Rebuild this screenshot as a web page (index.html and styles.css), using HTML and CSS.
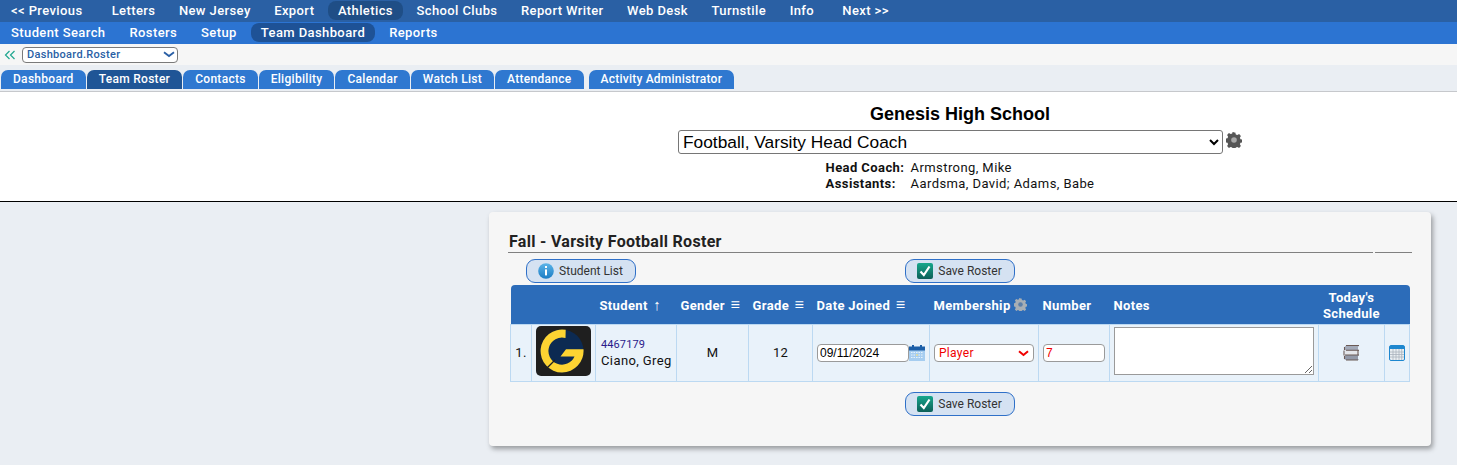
FILE: index.html
```html
<!DOCTYPE html>
<html lang="en">
<head>
<meta charset="utf-8">
<title>Team Roster</title>
<link rel="stylesheet" href="styles.css">
</head>
<body>
<nav class="nav nav-top">
  <a class="nav-item nav-edge-l">&lt;&lt; Previous</a>
  <a class="nav-item">Letters</a>
  <a class="nav-item">New Jersey</a>
  <a class="nav-item">Export</a>
  <a class="nav-item nav-active-top">Athletics</a>
  <a class="nav-item">School Clubs</a>
  <a class="nav-item">Report Writer</a>
  <a class="nav-item">Web Desk</a>
  <a class="nav-item">Turnstile</a>
  <a class="nav-item nav-edge-r">Info</a>
  <a class="nav-item">Next &gt;&gt;</a>
</nav>
<nav class="nav nav-sub">
  <a class="nav-item">Student Search</a>
  <a class="nav-item">Rosters</a>
  <a class="nav-item">Setup</a>
  <a class="nav-item nav-active-sub">Team Dashboard</a>
  <a class="nav-item">Reports</a>
</nav>
<div class="crumb">
  <svg class="crumb-icon" width="12" height="10" viewBox="0 0 12 10"><path d="M5.5 1 1.5 5l4 4M10.5 1l-4 4 4 4" fill="none" stroke="#1fa68f" stroke-width="1.2"/></svg>
  <div class="page-select">Dashboard.Roster
    <svg class="page-chevron" width="12" height="7" viewBox="0 0 12 7"><path d="M1 1.2 6 5l5-3.800" fill="none" stroke="#2a5fa5" stroke-width="1.8"/></svg>
  </div>
</div>
<div class="tabs">
  <a class="tab">Dashboard</a>
  <a class="tab tab-active">Team Roster</a>
  <a class="tab">Contacts</a>
  <a class="tab">Eligibility</a>
  <a class="tab">Calendar</a>
  <a class="tab">Watch List</a>
  <a class="tab">Attendance</a>
  <a class="tab tab-gap">Activity Administrator</a>
</div>
<header class="team-head">
  <h1 class="school">Genesis High School</h1>
  <div class="team-pick">
    <select class="team-select"><option>Football, Varsity Head Coach</option></select>
    <svg class="gear" width="16" height="16" viewBox="0 0 16 16"><use href="#gear"/></svg>
  </div>
  <dl class="staff">
    <dt>Head Coach:</dt><dd>Armstrong, Mike</dd>
    <dt>Assistants:</dt><dd>Aardsma, David; Adams, Babe</dd>
  </dl>
</header>
<main class="main">
  <section class="card">
    <div class="card-title">
      <h2 class="title-text">Fall - Varsity Football Roster</h2>
      <span class="title-end"></span>
    </div>
    <div class="actions">
      <button class="btn btn-list">
        <svg width="16" height="16" viewBox="0 0 16 16"><defs><linearGradient id="info" x1="0" y1="0" x2="0" y2="1"><stop offset="0" stop-color="#5bb4e8"/><stop offset="1" stop-color="#1b7cc4"/></linearGradient></defs><circle cx="8" cy="8" r="7.8" fill="url(#info)"/><rect x="7" y="3" width="2" height="2" fill="#fff"/><rect x="7" y="6.4" width="2" height="6" fill="#fff"/></svg>
        Student List
      </button>
      <button class="btn">
        <svg width="16" height="16" viewBox="0 0 16 16"><use href="#check"/></svg>
        Save Roster
      </button>
    </div>
    <table class="roster">
      <colgroup>
        <col class="c-num"><col class="c-pic"><col class="c-student"><col class="c-gender"><col class="c-grade"><col class="c-date"><col class="c-member"><col class="c-number"><col class="c-notes"><col class="c-sched"><col class="c-cal">
      </colgroup>
      <thead>
        <tr>
          <th></th><th></th>
          <th class="th-left">Student <span class="sort sort-arrow">↑</span></th>
          <th class="th-left">Gender <span class="sort">≡</span></th>
          <th class="th-left">Grade <span class="sort">≡</span></th>
          <th class="th-left">Date Joined <span class="sort">≡</span></th>
          <th class="th-left">Membership <svg class="th-gear" width="13" height="13" viewBox="0 0 16 16"><use href="#gear-light"/></svg></th>
          <th class="th-left">Number</th>
          <th class="th-left">Notes</th>
          <th class="th-sched">Today's Schedule</th>
          <th></th>
        </tr>
      </thead>
      <tbody>
        <tr>
          <td class="td-num">1.</td>
          <td class="td-pic">
            <svg class="logo" width="55" height="50" viewBox="0 0 55 50">
              <rect width="55" height="50" rx="5" fill="#1f1f1f"/>
              <circle cx="26" cy="25" r="21.500" fill="#0c2a52"/>
              <path d="M29.700 3.800A21.500 21.500 0 1 0 47.500 23.300H30L24.500 30.500H38.500A13.600 13.600 0 1 1 29.500 11.900Z" fill="#fdd432"/>
              <path d="M11 42 19 34" stroke="#1f1f1f" stroke-width="1.200"/>
            </svg>
          </td>
          <td class="td-student"><span class="sid">4467179</span><span class="sname">Ciano, Greg</span></td>
          <td class="td-center">M</td>
          <td class="td-center">12</td>
          <td class="td-date"><div class="inline-field"><input class="input input-date" value="09/11/2024">
            <svg width="16" height="16" viewBox="0 0 16 16"><use href="#cal-a"/></svg></div></td>
          <td class="td-member"><div class="member-select">Player
            <svg class="member-chevron" width="11" height="7" viewBox="0 0 11 7"><path d="M1 1.2 5.5 5 10 1.2" fill="none" stroke="#f00000" stroke-width="2"/></svg></div></td>
          <td class="td-number"><input class="input input-number" value="7"></td>
          <td class="td-notes"><textarea class="notes"></textarea></td>
          <td class="td-center td-icon">
            <svg width="17" height="17" viewBox="0 0 17 17"><path d="M3 1.500h13l-1 1.500v3l1 .5H3L1.500 6V3Z" fill="#a3aab8"/><path d="M2 6.500h13v4.500H2Z" fill="#e4e6ea"/><path d="M3 11h13l-1 1v3l1 1H3l-2-1v-3Z" fill="#9299a8"/><path d="M3 1.500h13M1.500 3v3M3 6.300h13M1 6.500v5M15 6.500v5M2 11h14M1.500 12v3M3 16h12" stroke="#6b5a55" stroke-width="1.1" fill="none"/></svg>
          </td>
          <td class="td-center td-icon">
            <svg width="16" height="16" viewBox="0 0 16 16"><rect x=".5" y=".5" width="15" height="15" rx="1.500" fill="#e9eef2" stroke="#1e87cf"/><rect x="1" y="1" width="14" height="3" fill="#1e87cf"/><path d="M1 7h14M1 9.500h14M1 12h14M4 4v11M7 4v11M10 4v11M12.700 4v11" stroke="#aab3bd" stroke-width=".8"/></svg>
          </td>
        </tr>
      </tbody>
    </table>
    <div class="actions-bottom">
      <button class="btn">
        <svg width="16" height="16" viewBox="0 0 16 16"><use href="#check"/></svg>
        Save Roster
      </button>
    </div>
  </section>
</main>
<svg class="defs" width="0" height="0">
  <defs>
    <linearGradient id="chk" x1="0" y1="0" x2="0" y2="1"><stop offset="0" stop-color="#17a78c"/><stop offset="1" stop-color="#0c5f58"/></linearGradient>
    <symbol id="check" viewBox="0 0 16 16"><rect width="16" height="16" rx="2" fill="url(#chk)"/><path d="M3.500 8.500 6.800 12 12.500 3.500" fill="none" stroke="#fff" stroke-width="2.200"/></symbol>
    <symbol id="gear" viewBox="0 0 16 16"><path d="M8 .5l1.300 0 .5 2 1.500.6 1.800-1 1.800 1.800-1 1.800.6 1.500 2 .5v2.600l-2 .5-.6 1.500 1 1.800-1.800 1.800-1.800-1-1.500.6-.5 2H6.700l-.5-2-1.500-.6-1.800 1-1.800-1.800 1-1.800-.6-1.500-2-.5V6.700l2-.5.6-1.500-1-1.800L2.900 1.100l1.800 1 1.500-.6.500-2Z" fill="#555"/><circle cx="8" cy="8" r="2.800" fill="#a9a9a9"/></symbol>
    <symbol id="gear-light" viewBox="0 0 16 16"><path d="M8 .5l1.300 0 .5 2 1.500.6 1.800-1 1.800 1.800-1 1.800.6 1.500 2 .5v2.600l-2 .5-.6 1.500 1 1.800-1.800 1.800-1.800-1-1.500.6-.5 2H6.700l-.5-2-1.500-.6-1.800 1-1.800-1.800 1-1.800-.6-1.500-2-.5V6.700l2-.5.6-1.500-1-1.800L2.900 1.100l1.800 1 1.500-.6.500-2Z" fill="#a8aeb4"/><circle cx="8" cy="8" r="2.800" fill="#5d7fa8"/></symbol>
    <symbol id="cal-a" viewBox="0 0 16 16"><rect x="0" y="5" width="16" height="11" fill="#a6cdf0"/><rect x="0" y="1.500" width="16" height="4" fill="#1c5fa8"/><rect x="3" y="0" width="2" height="3" fill="#1c5fa8"/><rect x="11" y="0" width="2" height="3" fill="#1c5fa8"/><path d="M2 7.500h12M2 10h12M2 12.500h12" stroke="#e8f2fa" stroke-width="1.100" stroke-dasharray="1.500 1"/><rect x="7" y="9.500" width="2" height="1" fill="#ecd76a"/></symbol>
  </defs>
</svg>
</body>
</html>
```
FILE: styles.css
```css
* { box-sizing: border-box; }
html, body { margin: 0; padding: 0; }
body {
  width: 1457px;
  height: 465px;
  overflow: hidden;
  background: #eaeef3;
  font-family: Roboto, "Liberation Sans", sans-serif;
  font-size: 13px;
  color: #111;
}
.defs { position: absolute; }

.nav { display: flex; align-items: flex-start; height: 22px; padding: 1px 0 0 1px; gap: 3.5px; }
.nav-top { background: #2a60a4; }
.nav-top .nav-item { padding-top: 1px; line-height: 18px; }
.nav-sub { background: #2c74d2; gap: 4px; }
.nav-item {
  color: #fff;
  font-weight: 500;
  font-size: 13px;
  letter-spacing: .4px;
  line-height: 19px;
  padding: 0 10px;
  border-radius: 8px;
  white-space: nowrap;
}
.nav-edge-l { margin-right: 5.600px; }
.nav-edge-r { margin-right: 4.700px; }
.nav-active-top { background: #1f4e86; }
.nav-active-sub { background: #1e5296; }

.crumb { display: flex; align-items: center; height: 21px; background: #f6f6f6; padding-left: 4px; gap: 6px; }
.crumb-icon { flex: none; }
.page-select {
  position: relative;
  width: 156px;
  height: 16px;
  background: #fff;
  border: 1px solid #7a7a7a;
  border-radius: 4px;
  color: #2a5fa5;
  font-size: 11px;
  font-weight: 500;
  letter-spacing: .3px;
  line-height: 14px;
  padding-left: 4px;
}
.page-chevron { position: absolute; right: 2px; top: 3px; }

.tabs { display: flex; align-items: flex-end; height: 27px; padding: 0 0 2px 1px; gap: 1px; background: #eaeef3; border-bottom: 1px solid #c6c8cc; }
.tab {
  height: 19px;
  background: #2f78d0;
  color: #fff;
  font-size: 12px;
  font-weight: 500;
  letter-spacing: .29px;
  line-height: 19px;
  padding: 0 12px;
  border-radius: 7px 7px 0 0;
  white-space: nowrap;
}
.tab-active { background: #1f5596; }
.tab-gap { margin-left: 4px; letter-spacing: .22px; }

.team-head {
  height: 110px;
  background: #fff;
  border-bottom: 1px solid #000;
  padding: 10px 26px 0 489px;
  display: flex;
  flex-direction: column;
  align-items: center;
}
.school { margin: 0; font-family: "Liberation Sans", Arial, sans-serif; font-size: 18px; font-weight: 700; line-height: 24px; color: #000; }
.team-pick { display: flex; align-items: center; gap: 3px; margin-top: 4px; }
.team-select {
  width: 545px;
  height: 24px;
  font-family: "Liberation Sans", Arial, sans-serif;
  font-size: 17.330px;
  background: #fff;
  color: #000;
  border: 1px solid #767676;
  border-radius: 3px;
  padding: 0;
}
.gear { margin-top: -4px; }
.staff { display: grid; grid-template-columns: 85px auto; margin: 6px 0 0; font-size: 13px; line-height: 16px; letter-spacing: .42px; }
.staff dt { font-weight: 700; }
.staff dd { margin: 0; }

.main { padding: 10px 26px 0 489px; }
.card {
  height: 234px;
  background: #f6f6f6;
  border-radius: 4px;
  box-shadow: 2px 3px 5px rgba(0,0,0,.35);
  padding: 20px 19px 0;
}
.card-title { display: flex; gap: 2px; height: 21px; }
.title-text {
  flex: 1;
  margin: 0;
  padding-left: 1px;
  font-size: 16px;
  font-weight: 700;
  letter-spacing: .3px;
  line-height: 20px;
  color: #222;
  border-bottom: 1px solid #808080;
}
.title-end { width: 37px; border-bottom: 1px solid #808080; }

.actions { display: grid; grid-template-columns: 1fr auto 1fr; height: 32px; padding-top: 6px; align-items: start; }
.btn {
  display: flex;
  align-items: center;
  justify-content: center;
  gap: 5px;
  width: 110px;
  height: 24px;
  padding: 0 1px 0 0;
  background: #d5e2f2;
  border: 1px solid #2f70c8;
  border-radius: 9px;
  font-family: Roboto, sans-serif;
  font-size: 12px;
  color: #333;
}
.btn-list { margin-left: 18px; }
.actions-bottom { display: flex; justify-content: center; margin-top: 10px; }

.roster { width: 899px; margin-left: 2px; table-layout: fixed; border-collapse: collapse; }
.c-num { width: 21px; } .c-pic { width: 64px; } .c-student { width: 81px; } .c-gender { width: 72px; }
.c-grade { width: 64px; } .c-date { width: 117px; } .c-member { width: 109px; } .c-number { width: 71px; }
.c-notes { width: 209px; } .c-sched { width: 66px; } .c-cal { width: 25px; }
.roster thead tr { height: 39px; background: #2c6cb9; }
.roster th { color: #fff; font-size: 13px; font-weight: 700; letter-spacing: .36px; line-height: 16px; padding: 4px 0 0; }
.roster th:first-child { border-top-left-radius: 4px; }
.roster th:last-child { border-top-right-radius: 4px; }
.th-left { text-align: left; padding-left: 4px !important; white-space: nowrap; }
.sort { font-weight: 400; font-size: 16px; line-height: 14px; margin-left: 2px; }
.sort-arrow { font-size: 15px; }
.th-gear { vertical-align: -1px; }
.th-sched { text-align: center; }

.roster td { height: 57px; background: #e9f2fa; border: 1px solid #bcd9f2; padding: 0; font-size: 13px; letter-spacing: .3px; color: #111; }
.td-num { text-align: center; }
.td-pic { padding: 1px 0 0 4px !important; vertical-align: top; }
.logo { display: block; }
.td-student { padding-left: 5px !important; white-space: nowrap; }
.sid { display: block; color: #2a1a8a; font-size: 11px; letter-spacing: .1px; line-height: 16px; }
.sname { display: block; line-height: 16px; letter-spacing: .4px; }
.td-center { text-align: center; }
.td-icon svg { display: block; margin: 0 auto; }
.inline-field { display: flex; align-items: center; padding-left: 4px; }
.input {
  height: 18px;
  background: #fff;
  border: 1px solid #9a9a9a;
  border-radius: 4px;
  font-family: "Liberation Sans", Arial, sans-serif;
  font-size: 12px;
  padding: 0 2px;
}
.input-date { width: 92px; color: #000; }
.input-number { width: 62px; margin-left: 4px; color: #f00000; display: block; }
.td-member { padding: 0 4px !important; }
.member-select {
  position: relative;
  height: 18px;
  background: #fff;
  border: 1px solid #9a9a9a;
  border-radius: 4px;
  color: #f00000;
  font-size: 12px;
  line-height: 16px;
  padding-left: 4px;
}
.member-chevron { position: absolute; right: 4px; top: 5px; }
.td-notes { padding: 2px 4px 0 !important; vertical-align: top; }
.notes { display: block; width: 200px; height: 48px; margin: 0; background: #fff; border: 1px solid #9a9a9a; border-radius: 0; padding: 0; }
```
